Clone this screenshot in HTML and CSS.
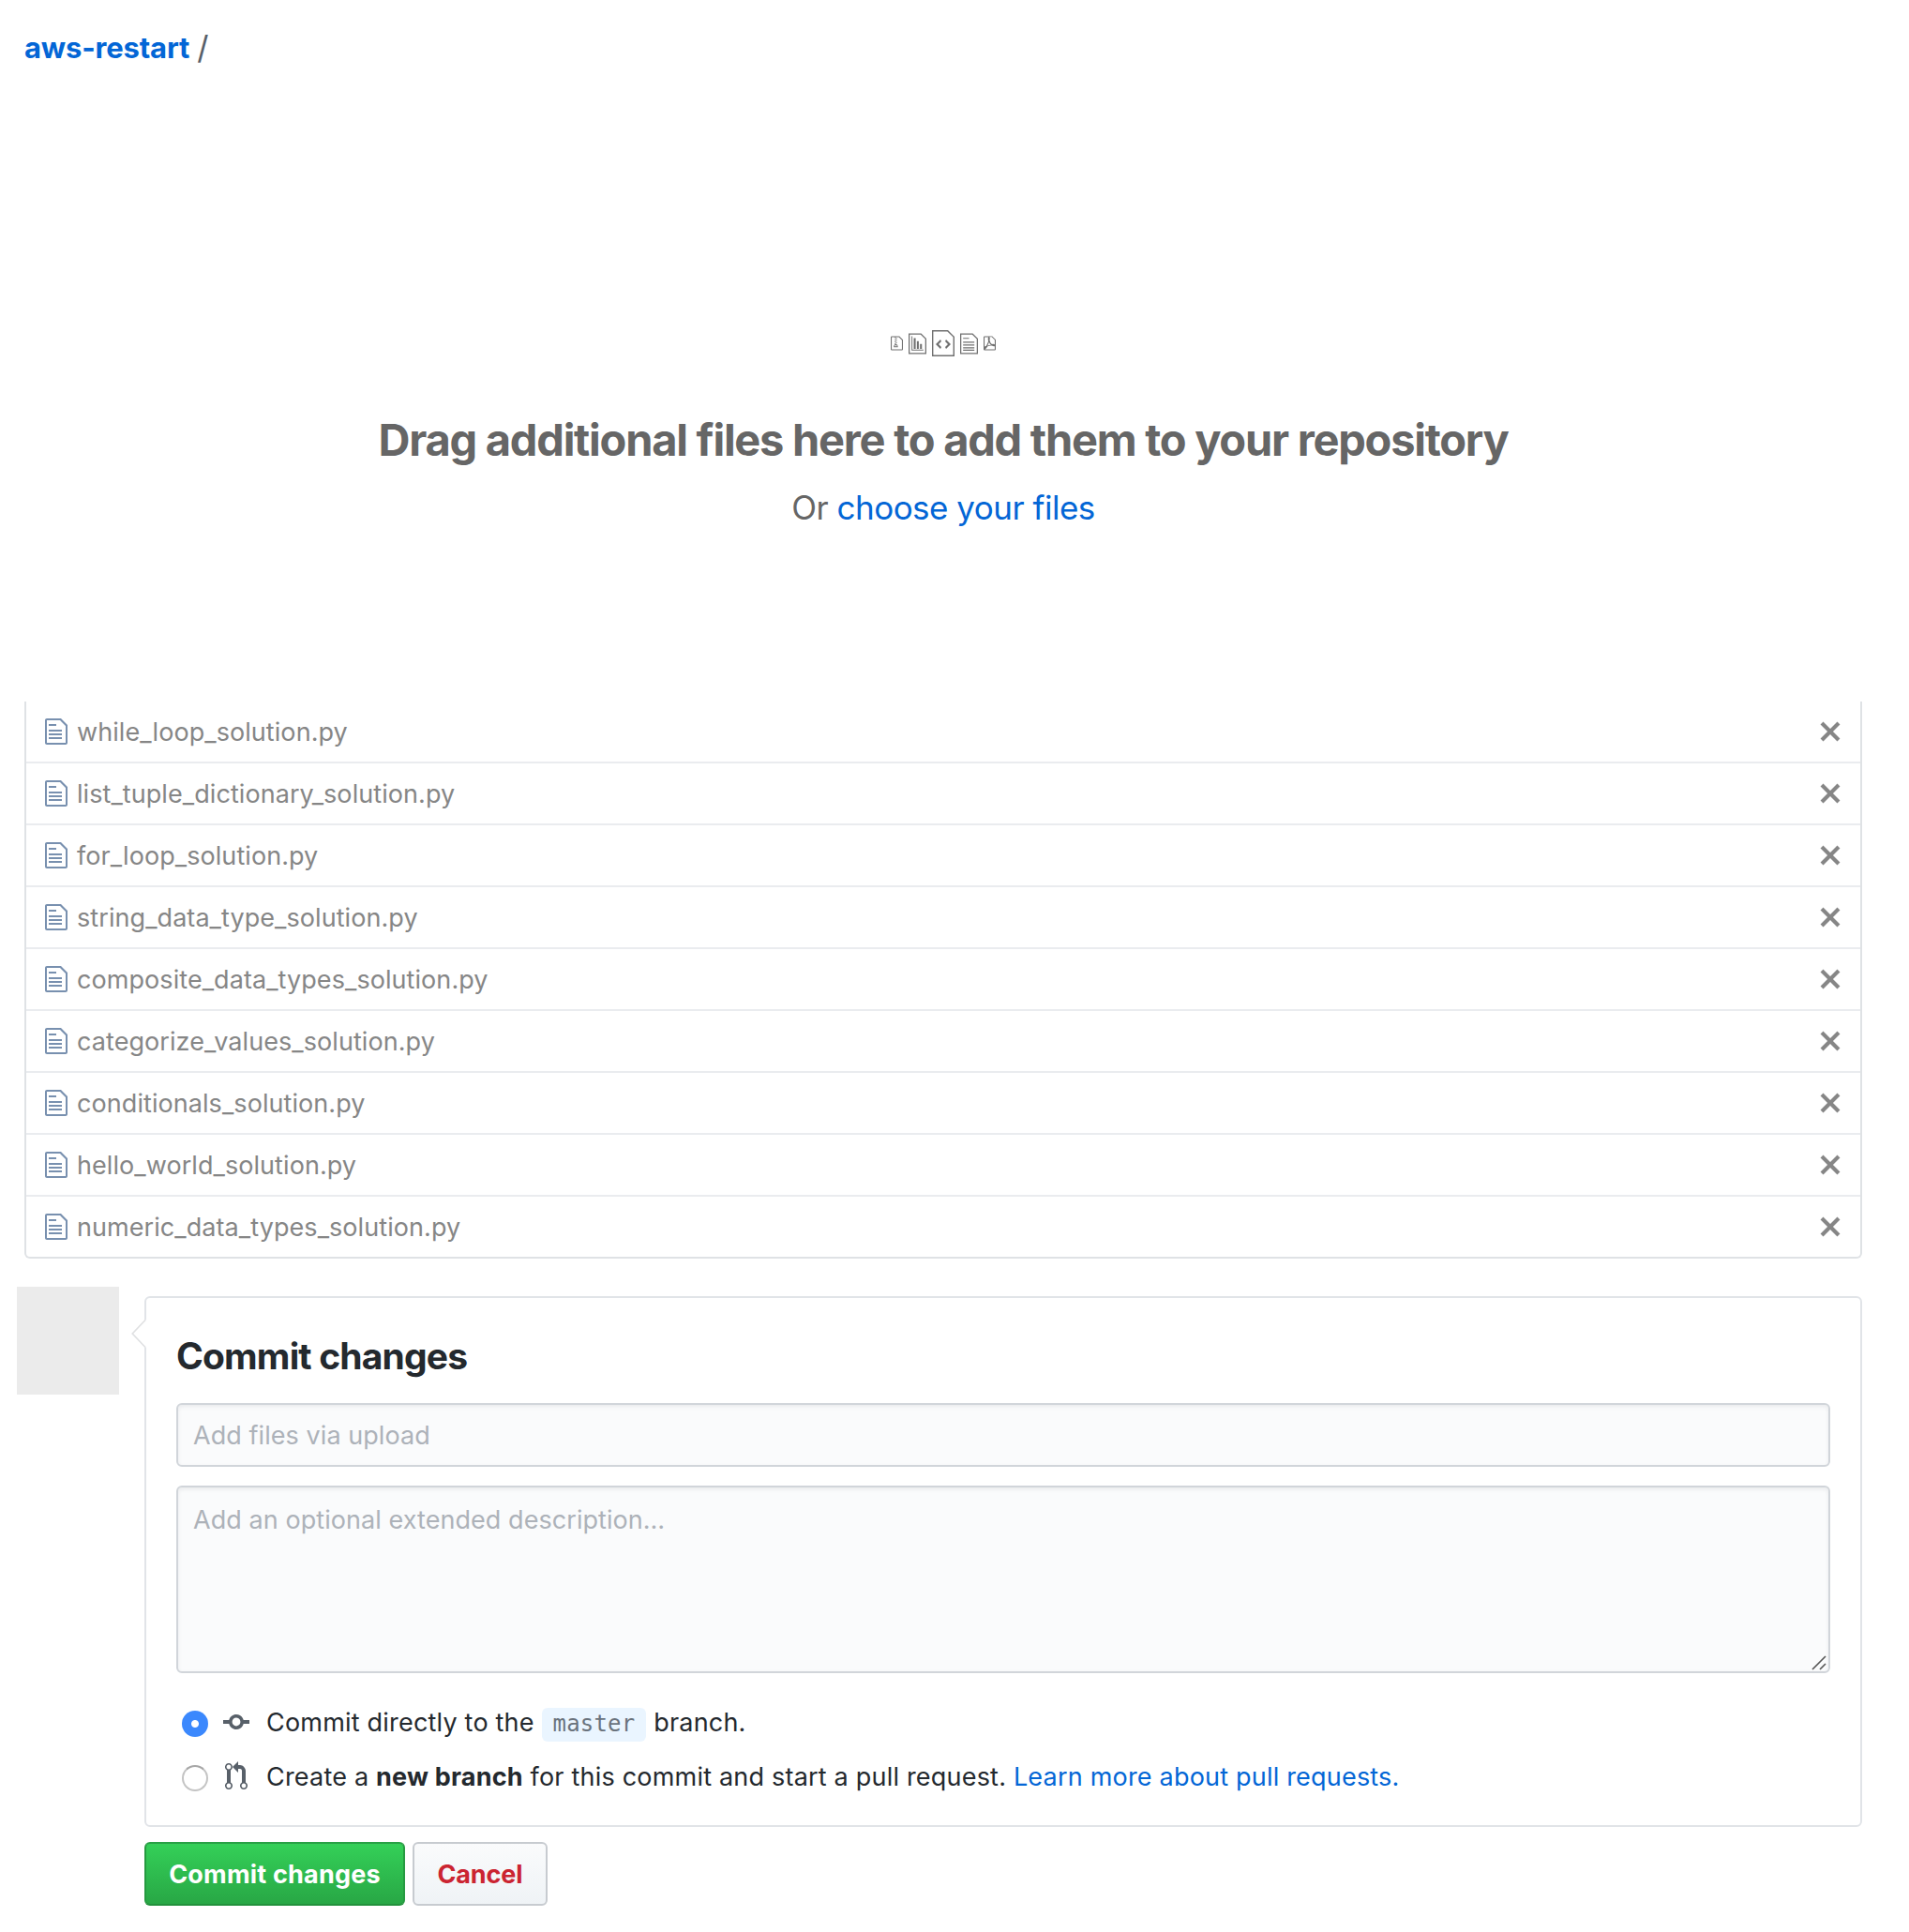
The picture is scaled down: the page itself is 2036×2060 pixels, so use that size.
FILE: index.html
```html
<!DOCTYPE html>
<html lang="en">
<head>
<meta charset="utf-8">
<title>Upload files</title>
<link rel="stylesheet" href="styles.css">
</head>
<body>
<svg class="sprite" aria-hidden="true">
  <symbol id="file" viewBox="0 0 12 16"><path d="M6 5H2V4h4v1zM2 8h7V7H2v1zm0 2h7V9H2v1zm0 2h7v-1H2v1zm10-7.5V14c0 .55-.45 1-1 1H1c-.55 0-1-.45-1-1V2c0-.55.45-1 1-1h7.5L12 4.5zM11 5L8 2H1v12h10V5z"/></symbol>
  <symbol id="x" viewBox="0 0 12 16"><path d="M7.48 8l3.75 3.75-1.48 1.48L6 9.48l-3.75 3.75-1.48-1.48L4.52 8 .77 4.25l1.48-1.48L6 6.52l3.75-3.75 1.48 1.48L7.48 8z"/></symbol>
</svg>

<header class="breadcrumb"><a class="repo" href="#">aws-restart</a><span class="slash">/</span></header>

<main>
  <section class="dropzone">
    <div class="file-types">
      <svg class="type-sm" viewBox="0 1 12 14"><path d="M8.500 1H1a1 1 0 0 0-1 1v12a1 1 0 0 0 1 1h10a1 1 0 0 0 1-1V4.500L8.500 1zM11 14H1V2h3v1h1V2h3l3 3v9zM5 4V3h1v1H5zM4 4h1v1H4V4zm1 2V5h1v1H5zM4 6h1v1H4V6zm1 2V7h1v1H5zM4 9.280A2 2 0 0 0 3 11v1h4v-1a2 2 0 0 0-2-2V8H4v1.280zM6 10v1H4v-1h2z"/></svg>
      <svg class="type-md" viewBox="0 1 12 14"><path d="M8.500 1H0v14h12V4.500L8.500 1zM11.200 14.200H.8V1.800h7.300l3.100 3.100v9.300zM2 3h.6v8.900H10v.6H2zM3.500 4.200h1.300v7.300H3.500zM5.600 6.200h1.300v5.300H5.600zM7.700 8.200H9v3.300H7.700z"/></svg>
      <svg class="type-lg" viewBox="0 1 12 14"><path d="M8.500 1H0v14h12V4.500L8.500 1zm2.800 13.300H.7V1.700h7.500l3.100 3.100v9.500zM5 6.980L3.500 8.500 5 10l-.5 1L2 8.500 4.500 6l.5.98zM7.500 6L10 8.500 7.500 11l-.5-.98L8.500 8.500 7 7l.5-1z"/></svg>
      <svg class="type-md" viewBox="0 1 12 14"><path d="M8.500 1H0v14h12V4.500L8.500 1zM11.200 14.200H.8V1.800h7.300l3.100 3.100v9.300zM2 4h4v.7H2zM2 6.600h7.600v.8H2zM2 8.500h7.600v.8H2zM2 10.300h7.600v.8H2zM2 12h7.600v.7H2z"/></svg>
      <svg class="type-sm" viewBox="0 1 12 14"><path d="M8.500 1H1a1 1 0 0 0-1 1v12a1 1 0 0 0 1 1h10a1 1 0 0 0 1-1V4.500L8.500 1zM1 2h4a.68.68 0 0 0-.31.2 1.080 1.080 0 0 0-.23.47 4.220 4.220 0 0 0-.09 1.470c.06.609.173 1.211.34 1.800A21.780 21.780 0 0 1 3.600 8.600c-.5 1-.8 1.660-.91 1.840a7.156 7.156 0 0 0-.69.3 4.190 4.190 0 0 0-1 .64V2zm4.420 4.800a5.650 5.650 0 0 0 1.170 2.090c.275.237.595.417.94.53-.64.09-1.230.2-1.810.33-.618.15-1.223.347-1.810.59s.22-.44.61-1.250c.365-.74.67-1.510.91-2.300l-.01.01zM11 14H1.500a.743.743 0 0 1-.17 0 2.120 2.120 0 0 0 .73-.44 10.140 10.140 0 0 0 1.780-2.380c.31-.13.58-.23.81-.31l.42-.14c.45-.13.94-.23 1.440-.33s1-.16 1.480-.2a8.650 8.650 0 0 0 1.390.53c.403.11.814.188 1.230.23h.38V14H11zm0-4.860a3.740 3.740 0 0 0-.64-.28 4.220 4.220 0 0 0-.75-.11c-.411.003-.822.03-1.230.08a3 3 0 0 1-1.840-2.310 6.070 6.070 0 0 1-.6-1.520 6.290 6.290 0 0 0 .26-2.180 2.500 2.500 0 0 0-.21-.83.72.72 0 0 0-.31-.32h2.320l3 3v4.470z"/></svg>
    </div>
    <h1>Drag additional files here to add them to your repository</h1>
    <p>Or <a href="#">choose your files</a></p>
  </section>

  <ul class="files">
    <li><svg class="icon-file"><use href="#file"/></svg><span class="name">while_loop_solution.py</span><svg class="icon-x"><use href="#x"/></svg></li>
    <li><svg class="icon-file"><use href="#file"/></svg><span class="name">list_tuple_dictionary_solution.py</span><svg class="icon-x"><use href="#x"/></svg></li>
    <li><svg class="icon-file"><use href="#file"/></svg><span class="name">for_loop_solution.py</span><svg class="icon-x"><use href="#x"/></svg></li>
    <li><svg class="icon-file"><use href="#file"/></svg><span class="name">string_data_type_solution.py</span><svg class="icon-x"><use href="#x"/></svg></li>
    <li><svg class="icon-file"><use href="#file"/></svg><span class="name">composite_data_types_solution.py</span><svg class="icon-x"><use href="#x"/></svg></li>
    <li><svg class="icon-file"><use href="#file"/></svg><span class="name">categorize_values_solution.py</span><svg class="icon-x"><use href="#x"/></svg></li>
    <li><svg class="icon-file"><use href="#file"/></svg><span class="name">conditionals_solution.py</span><svg class="icon-x"><use href="#x"/></svg></li>
    <li><svg class="icon-file"><use href="#file"/></svg><span class="name">hello_world_solution.py</span><svg class="icon-x"><use href="#x"/></svg></li>
    <li><svg class="icon-file"><use href="#file"/></svg><span class="name">numeric_data_types_solution.py</span><svg class="icon-x"><use href="#x"/></svg></li>
  </ul>

  <form class="commit">
    <div class="avatar"></div>
    <div class="commit-body">
      <div class="panel">
        <svg class="caret" viewBox="0 0 16 32"><path class="caret-fill" d="M16 1L1.200 16 16 31z"/><path class="caret-line" d="M15 1.500L1.200 16 15 30.500"/></svg>
        <h2>Commit changes</h2>
        <div class="field summary">Add files via upload</div>
        <div class="field description">Add an optional extended description…
          <svg class="grip" viewBox="0 0 16 16"><path d="M1 15L15 1M9 15l6-6"/></svg>
        </div>
        <label class="choice first"><span class="radio on"></span><svg class="icon-commit" viewBox="0 0 14 16"><path d="M10.860 7c-.45-1.720-2-3-3.860-3-1.860 0-3.410 1.280-3.860 3H0v2h3.140c.45 1.720 2 3 3.860 3 1.860 0 3.410-1.280 3.860-3H14V7h-3.140zM7 10.200c-1.220 0-2.200-.98-2.200-2.200 0-1.220.98-2.200 2.200-2.200 1.220 0 2.200.98 2.200 2.200 0 1.220-.98 2.200-2.200 2.200z"/></svg><span class="text">Commit directly to the <code>master</code> branch.</span></label>
        <label class="choice"><span class="radio"></span><svg class="icon-pr" viewBox="0 0 12 16"><path d="M11 11.280V5c-.03-.78-.34-1.470-.94-2.060C9.460 2.350 8.780 2.030 8 2H7V0L4 3l3 3V4h1c.27.02.48.11.69.31.21.2.3.42.31.69v6.280A1.993 1.993 0 0 0 10 15a1.993 1.993 0 0 0 1-3.720zm-1 2.920c-.66 0-1.200-.55-1.200-1.200 0-.65.55-1.200 1.200-1.200.65 0 1.200.55 1.200 1.200 0 .65-.55 1.200-1.200 1.200zM4 3c0-1.110-.89-2-2-2a1.993 1.993 0 0 0-1 3.720v6.560A1.993 1.993 0 0 0 2 15a1.993 1.993 0 0 0 1-3.720V4.720c.59-.34 1-.98 1-1.720zm-.8 10c0 .66-.55 1.200-1.200 1.200-.65 0-1.200-.55-1.200-1.200 0-.65.55-1.200 1.200-1.200.65 0 1.200.55 1.200 1.200zM2 4.200C1.340 4.200.8 3.650.8 3c0-.65.55-1.200 1.200-1.200.65 0 1.200.55 1.200 1.200 0 .65-.55 1.200-1.200 1.200z"/></svg><span class="text">Create a <b>new branch</b> for this commit and start a pull request. <a href="#">Learn more about pull requests.</a></span></label>
      </div>
      <div class="actions">
        <button type="button" class="btn primary">Commit changes</button>
        <button type="button" class="btn cancel">Cancel</button>
      </div>
    </div>
  </form>
</main>
</body>
</html>
```
FILE: styles.css
```css
* { box-sizing: border-box; }

body {
  margin: 0;
  background: #fff;
  color: #24292e;
  font: 27px/42px Inter, "Liberation Sans", sans-serif;
}

a { color: #0366d6; text-decoration: none; }
svg { display: block; fill: currentColor; flex: none; }
.sprite { display: none; }

.breadcrumb {
  display: flex;
  gap: 8px;
  height: 120px;
  padding: 31px 26px 0;
  font-size: 31px;
  line-height: 40px;
}
.repo { font-weight: 650; letter-spacing: -0.17px; }
.slash { color: #586069; font-size: 34px; }

.dropzone {
  display: flex;
  flex-direction: column;
  align-items: center;
  width: 1960px;
  height: 628px;
  margin-left: 26px;
  padding-top: 232px;
  color: #666;
}
.file-types { display: flex; align-items: center; gap: 6px; height: 28px; color: #707070; }
.type-sm { width: 13px; height: 16px; }
.type-md { width: 19px; height: 23px; }
.type-lg { width: 24px; height: 28px; }
h1 { margin: 59px 0 0; font-size: 47px; line-height: 60px; font-weight: 650; letter-spacing: -1.25px; white-space: nowrap; }
.dropzone p { margin: 17px 0 0; font-size: 35px; line-height: 50px; letter-spacing: -0.5px; }

.files {
  width: 1960px;
  margin: 0 0 0 26px;
  padding: 0;
  list-style: none;
  color: #868686;
  border: solid #dfe2e5;
  border-width: 0 2px 2px;
  border-radius: 0 0 6px 6px;
}
.files li {
  display: flex;
  align-items: center;
  height: 66px;
  padding: 0 20px;
  border-top: 2px solid #eaecef;
}
.files li:first-child { height: 64px; border-top: 0; }
.icon-file { width: 24px; height: 32px; color: #7890af; }
.name { margin-left: 10px; padding-top: 1px; letter-spacing: 0.07px; }
.icon-x { width: 24px; height: 32px; margin-left: auto; }

.commit { display: flex; align-items: flex-start; padding: 30px 50px 0 18px; }
.avatar { width: 109px; height: 115px; background: #ebebeb; }
.commit-body { flex: 1; margin: 10px 0 0 27px; }
.panel {
  position: relative;
  height: 566px;
  padding: 38px 32px 0;
  border: 2px solid #e1e4e8;
  border-radius: 6px;
}
.caret { position: absolute; left: -16px; top: 22px; width: 16px; height: 32px; }
.caret-fill { fill: #fff; }
.caret-line { fill: none; stroke: #dfe0e2; stroke-width: 1.6; }
h2 { margin: 0; font-size: 39px; line-height: 48px; font-weight: 650; letter-spacing: -0.83px; }

.field {
  border: 2px solid #d1d5da;
  border-radius: 6px;
  background: #fafbfc;
  box-shadow: inset 0 2px 4px rgba(27, 31, 35, .075);
  color: #adb2b9;
  letter-spacing: 0.06px;
}
.summary { height: 68px; margin-top: 26px; padding: 12px 16px; }
.description { position: relative; height: 200px; margin-top: 20px; padding: 14px 16px; }
.grip { position: absolute; right: 2px; bottom: 1px; width: 16px; height: 16px; }
.grip path { fill: none; stroke: #555; stroke-width: 1.6; }

.choice { display: flex; align-items: center; height: 36px; margin-top: 22px; padding-left: 6px; }
.first { margin-top: 36px; }
.radio {
  width: 28px;
  height: 28px;
  border: 2px solid #c4c4c4;
  border-top-color: #a6a6a6;
  border-radius: 50%;
  background: #fff;
}
.on { border: 0; background: radial-gradient(circle, #fff 3.5px, #3b88fd 4.5px); }
.icon-commit { width: 28px; height: 32px; margin: -4px 18px 0 16px; color: #586069; }
.icon-pr { width: 24px; height: 32px; margin: -4px 20px 0 18px; color: #586069; }
.text { margin-top: -3px; white-space: nowrap; letter-spacing: 0.2px; }
.text b { font-weight: 700; }
code {
  display: inline-block;
  height: 36px;
  padding: 0 12px;
  border-radius: 6px;
  background: #eaf5ff;
  color: #6a737d;
  font: 24px/35px "DejaVu Sans Mono", monospace;
}

.actions { display: flex; gap: 8px; margin-top: 16px; }
.btn {
  height: 68px;
  padding: 1px 0 0;
  border: 2px solid #c7cbd0;
  border-radius: 6px;
  font: 650 27px/42px Inter, "Liberation Sans", sans-serif;
  letter-spacing: 0.2px;
}
.primary { width: 278px; border-color: #28a045 #269a41 #23913c; background: linear-gradient(#34d058, #28a745); color: #fff; }
.cancel { width: 144px; background: linear-gradient(#fafbfc, #eff3f6); color: #cb2431; letter-spacing: -0.1px; }
```
